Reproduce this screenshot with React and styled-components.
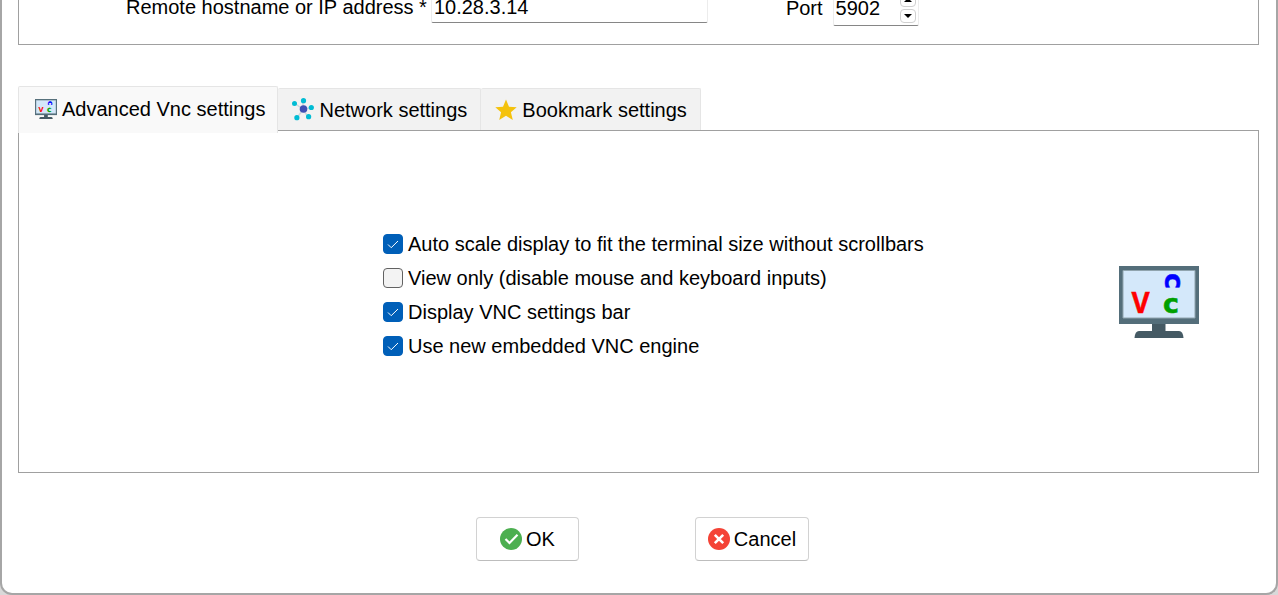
import React, { useState } from 'react';
import styled, { createGlobalStyle } from 'styled-components';

const GlobalStyle = createGlobalStyle`
  * { box-sizing: border-box; }
  body {
    margin: 0;
    background: #d9d9d9;
    color: #000;
    font: 20px/24px "Liberation Sans", Arial, sans-serif;
  }
  button, input { font: inherit; color: inherit; }
`;

const Dialog = styled.main`
  display: flex;
  flex-direction: column;
  min-height: 100vh;
  padding: 0 17px 32px 16px;
  background: #fff;
  border: 2px solid #a6a6a6;
  border-top: 0;
  border-radius: 0 0 12px 12px;
`;

const ServerGroup = styled.section`
  display: flex;
  align-items: flex-end;
  height: 45px;
  padding: 0 0 18px 107px;
  border: 1px solid #a0a0a0;
  border-top: 0;
  overflow: hidden;
`;

const Field = styled.div`
  display: flex;
  flex: none;
  align-items: center;
  gap: ${p => p.$gap}px;
  margin-left: ${p => p.$indent || 0}px;
  margin-bottom: ${p => p.$lift || 0}px;
`;

const FieldLabel = styled.label`
  white-space: nowrap;
`;

const Entry = styled.div`
  display: flex;
  align-items: center;
  width: ${p => p.$width}px;
  height: ${p => p.$height}px;
  padding: 0 2px;
  background: #fff;
  border: 1px solid #ececec;
  border-bottom-color: #868686;
  border-radius: 2px;
`;

const EntryInput = styled.input`
  flex: 1;
  min-width: 0;
  padding: 0;
  border: 0;
  outline: 0;
  background: transparent;
`;

const Spinner = styled.div`
  display: flex;
  flex-direction: column;
  gap: 2px;
`;

const SpinButton = styled.button`
  display: grid;
  place-items: center;
  width: 16px;
  height: 14px;
  padding: 0;
  background: #fff;
  border: 1px solid #d0d0d0;
  border-radius: 4px;
`;

const TabList = styled.div`
  display: flex;
  align-items: flex-end;
  margin-top: 41px;
`;

const Tab = styled.button`
  position: relative;
  display: flex;
  align-items: center;
  gap: 5px;
  height: ${p => (p.$active ? 47 : 42)}px;
  margin-bottom: ${p => (p.$active ? -3 : 0)}px;
  padding: ${p => (p.$active ? '0 12px 2px 16px' : '0 13px 0 14px')};
  background: ${p => (p.$active ? '#f9f9f9' : '#f2f2f2')};
  border: 1px solid #e5e5e5;
  border-bottom: 0;
  border-left-width: ${p => (p.$active ? 1 : 0)}px;
  border-radius: 2px 2px 0 0;
  white-space: nowrap;
  z-index: ${p => (p.$active ? 1 : 0)};
`;

const Panel = styled.section`
  display: grid;
  grid-template-columns: minmax(0, 364px) 1fr auto;
  align-items: center;
  height: 343px;
  padding-right: 59px;
  border: 1px solid #a0a0a0;
`;

const OptionList = styled.div`
  display: flex;
  flex-direction: column;
  grid-column: 2;
  gap: 10px;
  padding-bottom: 14px;
`;

const Option = styled.label`
  display: flex;
  align-items: center;
  gap: 5px;
  white-space: nowrap;
`;

const CheckMark = styled.span`
  position: relative;
  display: grid;
  width: 20px;
  height: 20px;
  svg {
    position: absolute;
    inset: 0;
    pointer-events: none;
  }
`;

const Checkbox = styled.input`
  appearance: none;
  width: 20px;
  height: 20px;
  margin: 0;
  background: #f3f3f3;
  border: 1px solid #626262;
  border-radius: 4px;
  &:checked { background: #005fb8; border-color: #005fb8; }
`;

const Actions = styled.footer`
  display: flex;
  justify-content: center;
  gap: 116px;
  margin-top: 44px;
  padding-left: 8px;
`;

const ActionButton = styled.button`
  display: flex;
  align-items: center;
  justify-content: center;
  gap: 4px;
  min-width: 103px;
  height: 44px;
  padding: 0 12px;
  background: #fff;
  border: 1px solid #d2d2d2;
  border-bottom-color: #bdbdbd;
  border-radius: 4px;
`;

function VncIcon({ width, height }) {
  const round = { fontFamily: 'DejaVu Sans', fontWeight: 700, fontSize: 27, textAnchor: 'middle' };
  return (
    <svg width={width} height={height} viewBox="0 0 80 72" preserveAspectRatio="none" aria-hidden="true">
      <path d="M33 57h13.500v9H33z" fill="#455a64" />
      <path d="M20 65h40q4 0 4.500 7h-49q.5-7 4.500-7z" fill="#455a64" />
      <path d="M0 0h80v58H0z" fill="#546e7a" />
      <path d="M4 4.500h72v47.500H4z" fill="#d4e8fa" stroke="#90a4ae" strokeWidth="1" />
      <text x="21.500" y="47" fontFamily="Open Sans" fontWeight="700" fontSize="28" textAnchor="middle" fill="#ff0000" stroke="#ff0000" strokeWidth=".4">V</text>
      <text x="52" y="46.500" fill="#00a000" stroke="#00a000" strokeWidth=".5" {...round}>c</text>
      <text transform="translate(45.500 15) rotate(90)" x="0" y="0" fill="#0000ff" stroke="#0000ff" strokeWidth=".5" {...round}>c</text>
    </svg>
  );
}

function NetworkIcon() {
  return (
    <svg width="22" height="23" viewBox="0 0 22 23" aria-hidden="true">
      <path d="M11 11.500 2.500 5M11 11.500V2.500M11 11.500l8.500-2M11 11.500l5.500 8M11 11.500l-6.500 9" stroke="#cfd8dc" strokeWidth="1.500" />
      <g fill="#00bcd4">
        <circle cx="2.500" cy="5.500" r="2.500" />
        <circle cx="11.500" cy="2.700" r="2.600" />
        <circle cx="19.300" cy="9.500" r="2.600" />
        <circle cx="16.600" cy="18.700" r="2.600" />
        <circle cx="4.900" cy="19.700" r="2.600" />
      </g>
      <circle cx="11.500" cy="11" r="3.800" fill="#3f51b5" />
    </svg>
  );
}

function StarIcon() {
  return (
    <svg width="22" height="22" viewBox="0 0 22 22" aria-hidden="true">
      <path d="m11 .5 3 7.200 7.700.6-5.800 5 1.900 7.700-6.800-4.200L4.200 21l1.900-7.700-5.800-5L8 7.700z" fill="#f4c20d" />
    </svg>
  );
}

function OkIcon() {
  return (
    <svg width="22" height="22" viewBox="0 0 22 22" aria-hidden="true">
      <circle cx="11" cy="11" r="11" fill="#4caf50" />
      <path d="m5.500 11 4 4 8-8.300" fill="none" stroke="#fff" strokeWidth="2.200" />
    </svg>
  );
}

function CancelIcon() {
  return (
    <svg width="22" height="22" viewBox="0 0 22 22" aria-hidden="true">
      <circle cx="11" cy="11" r="11" fill="#f44336" />
      <path d="m6.800 6.800 8.400 8.400m0-8.400-8.400 8.400" stroke="#fff" strokeWidth="2.600" />
    </svg>
  );
}

function Arrow({ up }) {
  return (
    <svg width="8" height="4" viewBox="0 0 8 4" aria-hidden="true">
      <path d={up ? 'M0 4h8L4 0z' : 'M0 0h8L4 4z'} />
    </svg>
  );
}

function CheckOption({ label, initial }) {
  const [checked, setChecked] = useState(initial);
  return (
    <Option>
      <CheckMark>
        <Checkbox type="checkbox" checked={checked} onChange={e => setChecked(e.target.checked)} />
        {checked && (
          <svg width="20" height="20" viewBox="0 0 20 20" aria-hidden="true">
            <path d="m5 10.500 3.200 3.200L15 7" fill="none" stroke="#fff" />
          </svg>
        )}
      </CheckMark>
      {label}
    </Option>
  );
}

export default function App() {
  return (
    <>
      <GlobalStyle />
      <Dialog>
        <ServerGroup>
          <Field $gap={4} $lift={3}>
            <FieldLabel htmlFor="host">Remote hostname or IP address *</FieldLabel>
            <Entry $width={277} $height={32}>
              <EntryInput id="host" defaultValue="10.28.3.14" />
            </Entry>
          </Field>
          <Field $gap={10} $indent={78}>
            <FieldLabel htmlFor="port">Port</FieldLabel>
            <Entry $width={86} $height={37}>
              <EntryInput id="port" defaultValue="5902" />
              <Spinner>
                <SpinButton aria-label="Increase port"><Arrow up /></SpinButton>
                <SpinButton aria-label="Decrease port"><Arrow /></SpinButton>
              </Spinner>
            </Entry>
          </Field>
        </ServerGroup>
        <TabList role="tablist">
          <Tab role="tab" aria-selected="true" $active><VncIcon width={22} height={20} />Advanced Vnc settings</Tab>
          <Tab role="tab" aria-selected="false"><NetworkIcon />Network settings</Tab>
          <Tab role="tab" aria-selected="false"><StarIcon />Bookmark settings</Tab>
        </TabList>
        <Panel role="tabpanel">
          <OptionList>
            <CheckOption label="Auto scale display to fit the terminal size without scrollbars" initial />
            <CheckOption label="View only (disable mouse and keyboard inputs)" initial={false} />
            <CheckOption label="Display VNC settings bar" initial />
            <CheckOption label="Use new embedded VNC engine" initial />
          </OptionList>
          <VncIcon width={80} height={72} />
        </Panel>
        <Actions>
          <ActionButton><OkIcon />OK</ActionButton>
          <ActionButton><CancelIcon />Cancel</ActionButton>
        </Actions>
      </Dialog>
    </>
  );
}
